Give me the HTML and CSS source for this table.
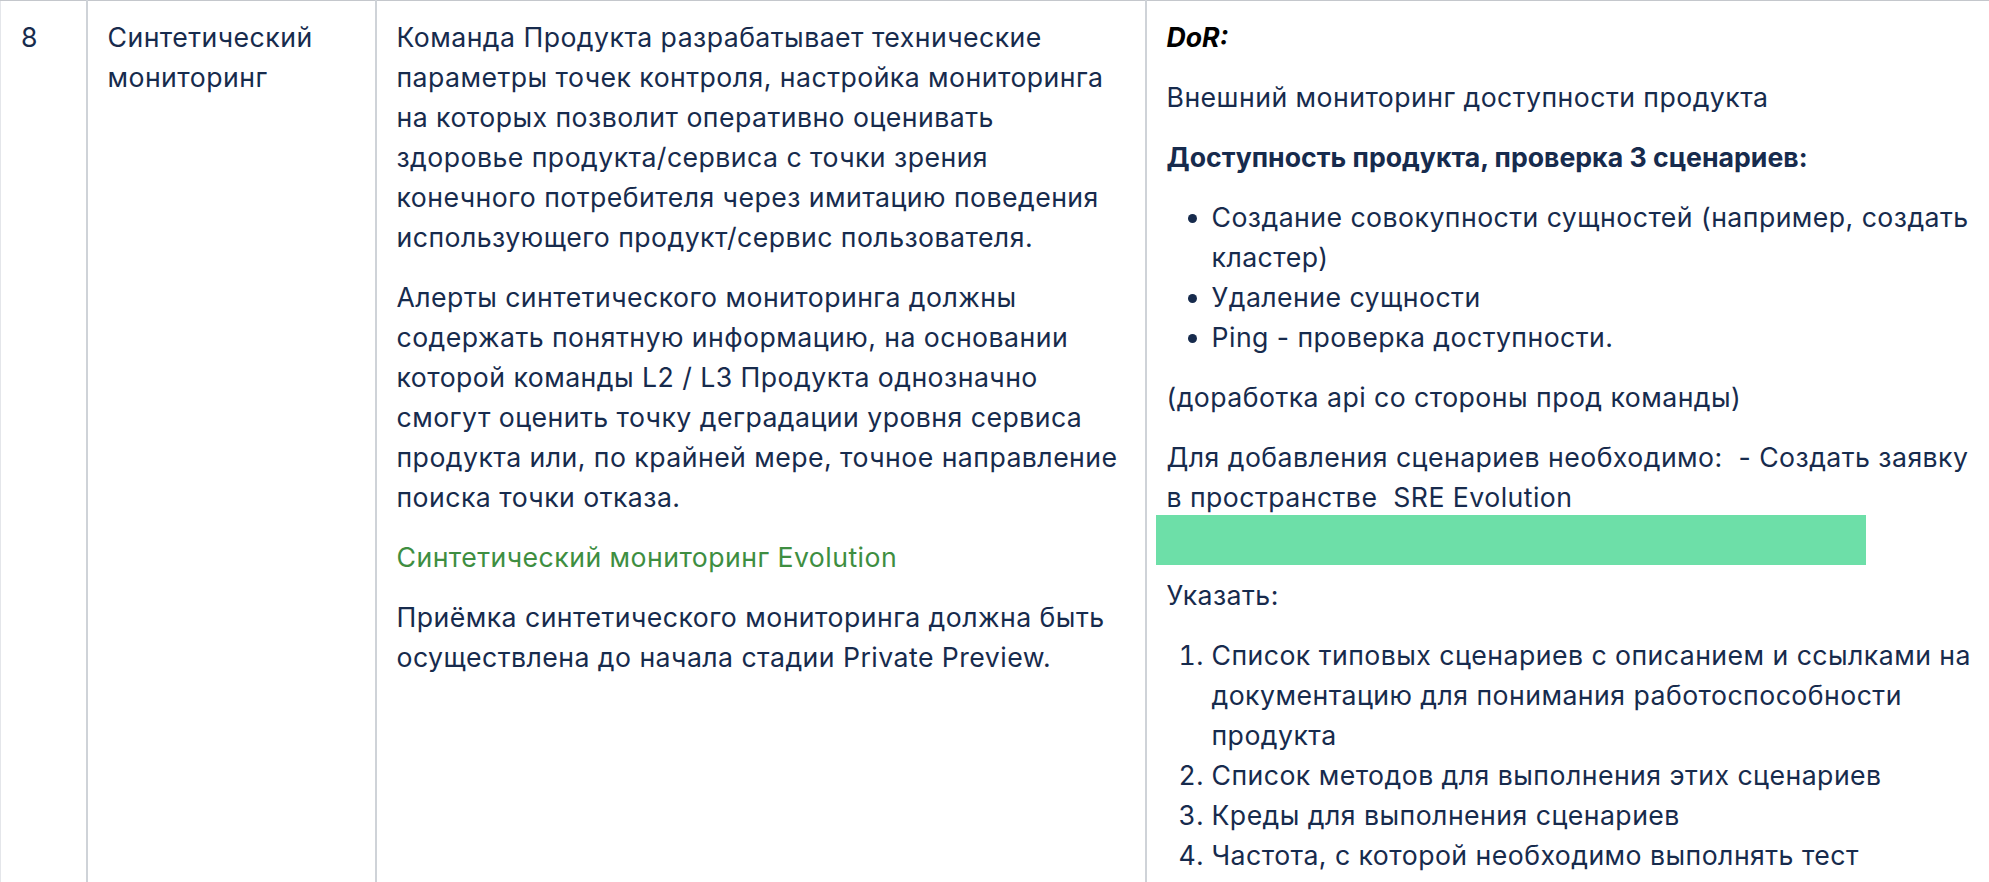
FILE: index.html
```html
<!DOCTYPE html>
<html lang="ru">
<head>
<meta charset="utf-8">
<title>Синтетический мониторинг</title>
<link rel="stylesheet" href="styles.css">
</head>
<body>
<table class="req-table">
  <colgroup>
    <col class="c-num">
    <col class="c-name">
    <col class="c-desc">
    <col class="c-dor">
  </colgroup>
  <tbody>
    <tr>
      <td class="cell">8</td>
      <td class="cell">Синтетический мониторинг</td>
      <td class="cell">
        <p class="para">Команда Продукта разрабатывает технические параметры точек контроля, настройка мониторинга на которых позволит оперативно оценивать здоровье продукта/сервиса с точки зрения конечного потребителя через имитацию поведения использующего продукт/сервис пользователя.</p>
        <p class="para">Алерты синтетического мониторинга должны содержать понятную информацию, на основании которой команды L2 / L3 Продукта однозначно смогут оценить точку деградации уровня сервиса продукта или, по крайней мере, точное направление поиска точки отказа.</p>
        <p class="para"><a class="link" href="#">Синтетический мониторинг Evolution</a></p>
        <p class="para">Приёмка синтетического мониторинга должна быть осуществлена до начала стадии Private Preview.</p>
      </td>
      <td class="cell">
        <p class="para"><strong class="dor">DoR:</strong></p>
        <p class="para">Внешний мониторинг доступности продукта</p>
        <p class="para"><strong>Доступность продукта, проверка 3 сценариев:</strong></p>
        <ul class="list">
          <li>Создание совокупности сущностей (например, создать кластер)</li>
          <li>Удаление сущности</li>
          <li>Ping - проверка доступности.</li>
        </ul>
        <p class="para">(доработка api со стороны прод команды)</p>
        <p class="para">Для добавления сценариев необходимо:&nbsp; - Создать заявку в пространстве&nbsp; SRE Evolution</p>
        <div class="redacted"></div>
        <p class="para after-redacted">Указать:</p>
        <ol class="list">
          <li>Список типовых сценариев с описанием и ссылками на документацию для понимания работоспособности продукта</li>
          <li>Список методов для выполнения этих сценариев</li>
          <li>Креды для выполнения сценариев</li>
          <li>Частота, с которой необходимо выполнять тест</li>
        </ol>
      </td>
    </tr>
  </tbody>
</table>
</body>
</html>
```

FILE: styles.css
```css
html, body {
  margin: 0;
  padding: 0;
  background: #ffffff;
  overflow: hidden;
}

body {
  font-family: Inter, "Noto Sans", "Liberation Sans", sans-serif;
  font-size: 26.67px;
  line-height: 40px;
  letter-spacing: 0.45px;
  color: #172b4d;
}

.req-table {
  border-collapse: collapse;
  table-layout: fixed;
  width: 1995px;
}

.c-num { width: 86px; }
.c-name { width: 289px; }
.c-desc { width: 770px; }
.c-dor { width: 850px; }

.cell {
  vertical-align: top;
  padding: 16px 20px 20px 20px;
  border-left: 2px solid #cfd3d8;
  border-top: 1px solid #c4c7cc;
  height: 1000px;
}

.cell:first-child {
  border-left: 1px solid #e4e6ea;
}

.para {
  margin: 20px 0 0 0;
}

.para:first-child {
  margin-top: 0;
}

.link {
  color: #3e8e41;
  text-decoration: none;
}

.dor {
  font-style: italic;
  font-weight: 700;
  color: #000000;
}

strong {
  font-weight: 700;
  letter-spacing: 0;
}

.list {
  margin: 20px 0 0 0;
  padding-left: 45px;
}

.redacted {
  margin: -2px 0 0 -11px;
  width: 710px;
  height: 50px;
  background: #6ddfa8;
}

.after-redacted {
  margin-top: 10px;
}
```
